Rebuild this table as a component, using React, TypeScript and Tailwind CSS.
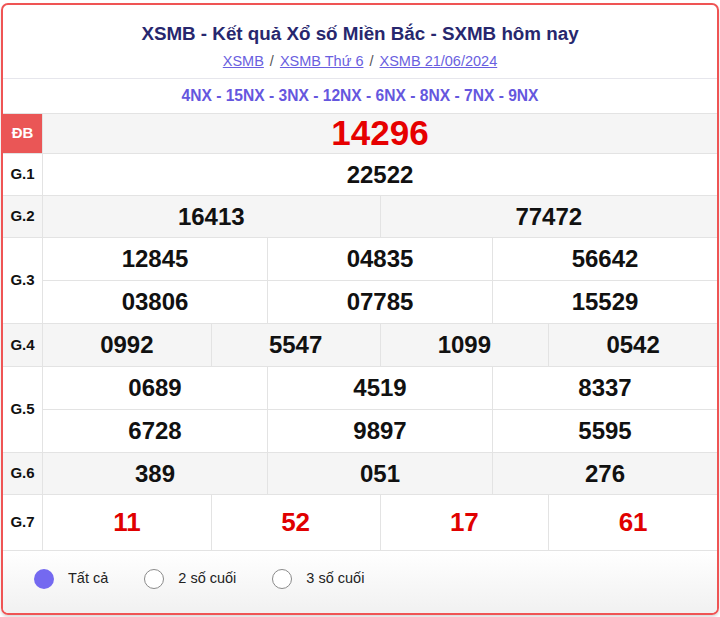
import React from "react";

type Row = {
  label: string;
  nums: string[][];
  h: number;
  alt: boolean;
  red?: boolean;
};

const rows: Row[] = [
  { label: "G.1", nums: [["22522"]], h: 42, alt: false },
  { label: "G.2", nums: [["16413", "77472"]], h: 42, alt: true },
  { label: "G.3", nums: [["12845", "04835", "56642"], ["03806", "07785", "15529"]], h: 43, alt: false },
  { label: "G.4", nums: [["0992", "5547", "1099", "0542"]], h: 43, alt: true },
  { label: "G.5", nums: [["0689", "4519", "8337"], ["6728", "9897", "5595"]], h: 43, alt: false },
  { label: "G.6", nums: [["389", "051", "276"]], h: 42, alt: true },
  { label: "G.7", nums: [["11", "52", "17", "61"]], h: 56, alt: false, red: true },
];

function PrizeRow({ row }: { row: Row }) {
  const bg = row.alt ? "bg-[#f5f5f5]" : "bg-white";
  return (
    <div className={`flex border-b border-[#e3e3e3] ${bg}`}>
      <div className="w-[40px] shrink-0 flex items-center justify-center border-r border-[#e3e3e3] text-[15px] font-bold text-[#111]">
        {row.label}
      </div>
      <div className="flex-1 flex flex-col">
        {row.nums.map((line, i) => (
          <div
            key={i}
            className={`flex ${i > 0 ? "border-t border-[#e3e3e3]" : ""}`}
            style={{ height: i === 0 ? row.h - 1 : row.h }}
          >
            {line.map((n, j) => (
              <div
                key={j}
                className={`flex-1 flex items-center justify-center font-bold ${
                  j > 0 ? "border-l border-[#e3e3e3]" : ""
                } ${row.red ? "text-[#e00000] text-[26px]" : "text-[#111] text-[24px]"}`}
              >
                {n}
              </div>
            ))}
          </div>
        ))}
      </div>
    </div>
  );
}

function Radio({ checked, label }: { checked?: boolean; label: string }) {
  return (
    <label className="flex items-center gap-[14px]">
      {checked ? (
        <span className="w-[20px] h-[20px] rounded-full bg-[#7469f0]" />
      ) : (
        <span className="w-[20px] h-[20px] rounded-full border border-[#8a8a8a] bg-white" />
      )}
      <span className="text-[14.5px] text-[#222]">{label}</span>
    </label>
  );
}

export default function App() {
  return (
    <div
      className="w-[720px] h-[617px] bg-white pt-[3px] px-[1px]"
      style={{ fontFamily: '"Liberation Sans", Arial, sans-serif' }}
    >
      <div className="h-[612px] border-2 border-[#ef5454] rounded-[7px] overflow-hidden flex flex-col shadow-[0_2px_3px_rgba(0,0,0,0.15)]">
        <div className="h-[74px] flex flex-col items-center border-b border-[#e6e6ec]">
          <h1 className="mt-[16px] text-[18.8px] leading-[26px] font-bold text-[#27276e]">
            XSMB - Kết quả Xổ số Miền Bắc - SXMB hôm nay
          </h1>
          <div className="mt-[5px] text-[14.5px] leading-[18px] text-[#555] flex items-center gap-[6px]">
            <a className="underline text-[#6a5fe0]">XSMB </a>
            <span>/</span>
            <a className="underline text-[#6a5fe0]">XSMB Thứ 6 </a>
            <span>/</span>
            <a className="underline text-[#6a5fe0]">XSMB 21/06/2024</a>
          </div>
        </div>
        <div className="h-[35px] flex items-center justify-center border-b border-[#e3e3e3] text-[15.6px] font-bold text-[#6557de]">
          4NX - 15NX - 3NX - 12NX - 6NX - 8NX - 7NX - 9NX
        </div>
        <div className="flex h-[40px] border-b border-[#e3e3e3] bg-[#f5f5f5]">
          <div className="w-[40px] shrink-0 flex items-center justify-center bg-[#ea5656] text-white text-[15px] font-bold border-r border-[#e3e3e3]">
            ĐB
          </div>
          <div className="flex-1 flex items-center justify-center text-[35px] font-bold text-[#e60000]">
            14296
          </div>
        </div>
        {rows.map((r) => (
          <PrizeRow key={r.label} row={r} />
        ))}
        <div className="flex-1 bg-gradient-to-b from-white to-[#f1f1f1] flex items-start pl-[31px] pt-[17px] gap-[36px]">
          <Radio checked label="Tất cả" />
          <Radio label="2 số cuối" />
          <Radio label="3 số cuối" />
        </div>
      </div>
    </div>
  );
}
